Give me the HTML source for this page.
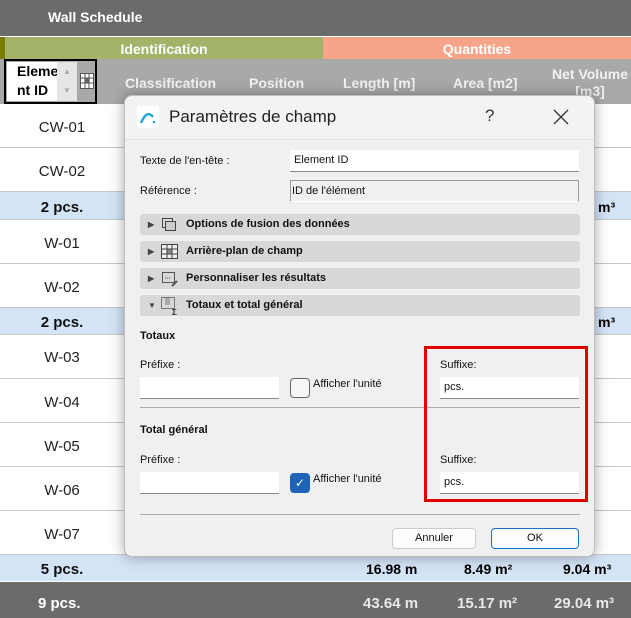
<!DOCTYPE html>
<html><head><meta charset="utf-8"><style>
*{margin:0;padding:0;box-sizing:border-box}
body{width:631px;height:618px;overflow:hidden;position:relative;background:#fff;font-family:"Liberation Sans",Arial,sans-serif}
.a{position:absolute}
.row{position:absolute;left:0;width:631px;border-bottom:1px solid #c8c8c8;background:#fff}
.row span{position:absolute;left:0;width:124px;text-align:center;font-size:15px;color:#222}
.sub{background:#d4e4f7}
.sub span{font-weight:bold;color:#111}
.dlg{position:absolute;left:124px;top:95px;width:471px;height:462px;background:#f0f0f0;border:1px solid #bdbdbd;border-radius:8px;box-shadow:0 0 14px rgba(0,0,0,.35);font-family:"Liberation Sans",sans-serif;font-size:11px;color:#111}
.in{position:absolute;background:#fff;border-bottom:1px solid #8a8a8a;font-size:11px;padding:4px 4px}
.bar{position:absolute;left:15px;width:440px;height:21px;background:#d8d8d8;border-radius:3px;font-weight:bold;font-size:11px;line-height:21px}
.bar .t{position:absolute;left:46px}
.bar .tri{position:absolute;left:8px;top:0;font-size:8px;color:#444}
.lbl{position:absolute;font-size:11px}
</style></head><body>
<div class="a" style="left:0;top:0;width:631px;height:36px;background:#6b6b6b"></div>
<div class="a" style="left:48px;top:9px;color:#fff;font-weight:bold;font-size:14px">Wall Schedule</div>
<div class="a" style="left:0;top:36px;width:631px;height:1px;background:#fff"></div>
<div class="a" style="left:0;top:37px;width:5px;height:22px;background:#7a7a00"></div>
<div class="a" style="left:5px;top:37px;width:318px;height:22px;background:#a3b46a;color:#fff;font-weight:bold;font-size:14px;text-align:center;line-height:24px">Identification</div>
<div class="a" style="left:323px;top:37px;width:308px;height:22px;background:#f7a58a;color:#fff;font-weight:bold;font-size:14px;text-align:center;line-height:24px">Quantities</div>
<div class="a" style="left:0;top:59px;width:631px;height:45px;background:#a9a9a9"></div>
<div class="a" style="left:4px;top:59px;width:93px;height:45px;border:2px solid #000;background:#a9a9a9"></div>
<div class="a" style="left:7px;top:62px;width:70px;height:39px;background:#fff;font-weight:bold;font-size:14px;line-height:19px;padding-left:10px">Eleme<br>nt ID</div>
<div class="a" style="left:57px;top:62px;width:20px;height:39px;background:#e6e6e6;color:#aaa;font-size:8px;text-align:center;line-height:19px">▲<br>▼</div>
<svg class="a" style="left:80px;top:73px" width="14" height="16"><rect x="0.5" y="0.5" width="13" height="15" fill="#fff" stroke="#555"/><rect x="5" y="5" width="4" height="5" fill="#666"/><path d="M5 0V16M9 0V16M0 5H14M0 10H14" stroke="#555"/></svg>
<div class="a" style="left:125px;top:75px;color:#f2f2f2;font-weight:bold;font-size:14px">Classification</div>
<div class="a" style="left:249px;top:75px;color:#f2f2f2;font-weight:bold;font-size:14px">Position</div>
<div class="a" style="left:343px;top:75px;color:#f2f2f2;font-weight:bold;font-size:14px">Length [m]</div>
<div class="a" style="left:453px;top:75px;color:#f2f2f2;font-weight:bold;font-size:14px">Area [m2]</div>
<div class="a" style="left:545px;top:66px;color:#f2f2f2;font-weight:bold;font-size:14px;text-align:center;width:90px;line-height:17px">Net Volume<br>[m3]</div>

<div class="row" style="top:104px;height:44px"><span style="top:15px">CW-01</span></div>
<div class="row" style="top:148px;height:44px"><span style="top:15px">CW-02</span></div>
<div class="row sub" style="top:192px;height:28px"><span style="top:7px">2 pcs.</span><b class="a" style="left:598px;top:7px;font-size:14px">m³</b></div>
<div class="row" style="top:220px;height:44px"><span style="top:15px">W-01</span></div>
<div class="row" style="top:264px;height:44px"><span style="top:15px">W-02</span></div>
<div class="row sub" style="top:308px;height:27px"><span style="top:6px">2 pcs.</span><b class="a" style="left:598px;top:6px;font-size:14px">m³</b></div>
<div class="row" style="top:335px;height:44px"><span style="top:14px">W-03</span></div>
<div class="row" style="top:379px;height:44px"><span style="top:15px">W-04</span></div>
<div class="row" style="top:423px;height:44px"><span style="top:15px">W-05</span></div>
<div class="row" style="top:467px;height:44px"><span style="top:15px">W-06</span></div>
<div class="row" style="top:511px;height:44px"><span style="top:15px">W-07</span></div>
<div class="row sub" style="top:555px;height:27px;border-bottom:1px solid #fff"><span style="top:6px">5 pcs.</span>
<b class="a" style="left:366px;top:6px;font-size:14px">16.98 m</b><b class="a" style="left:464px;top:6px;font-size:14px">8.49 m²</b><b class="a" style="left:563px;top:6px;font-size:14px">9.04 m³</b></div>
<div class="a" style="left:0;top:582px;width:631px;height:36px;background:#6b6b6b;color:#e8e8e8;font-weight:bold;font-size:15px">
<span class="a" style="left:38px;top:13px;color:#fff">9 pcs.</span>
<span class="a" style="left:363px;top:13px">43.64 m</span><span class="a" style="left:457px;top:13px">15.17 m²</span><span class="a" style="left:554px;top:13px">29.04 m³</span></div>

<div class="dlg">
<div class="a" style="left:0;top:0;width:469px;height:43px;background:#f3f3f3;border-radius:8px 8px 0 0"></div>
<svg class="a" style="left:12px;top:10px" width="22" height="22" viewBox="0 0 22 22"><rect width="22" height="22" rx="3" fill="#fff"/><path d="M4 17 Q10 3 16 11" stroke="#29a8e0" stroke-width="2.5" fill="none"/><circle cx="17" cy="16" r="1.3" fill="#29a8e0"/></svg>
<div class="a" style="left:44px;top:11px;font-size:17px;color:#222">Paramètres de champ</div>
<div class="a" style="left:360px;top:10px;font-size:17px;color:#333">?</div>
<svg class="a" style="left:428px;top:13px" width="16" height="16"><path d="M1 1L15 15M15 1L1 15" stroke="#333" stroke-width="1.3"/></svg>
<div class="a" style="left:0;top:43px;width:469px;height:1px;background:#e2e2e2"></div>
<div class="lbl" style="left:15px;top:59px">Texte de l'en-tête :</div>
<div class="in" style="left:165px;top:54px;width:289px;height:22px">Element ID</div>
<div class="lbl" style="left:15px;top:89px">Référence :</div>
<div class="in" style="left:165px;top:84px;width:289px;height:22px;background:#f0f0f0;border:1px solid #9a9a9a;border-bottom-color:#fff;padding-left:1px">ID de l'élément</div>
<div class="bar" style="top:118px"><span class="tri">▶</span><svg class="a" style="left:22px;top:4px" width="14" height="13"><rect x="0.5" y="0.5" width="10" height="9" fill="none" stroke="#444"/><rect x="3.5" y="3.5" width="10" height="9" fill="#ccc" stroke="#444"/></svg><span class="t">Options de fusion des données</span></div>
<div class="bar" style="top:145px"><span class="tri">▶</span><svg class="a" style="left:21px;top:3px" width="17" height="15"><rect x="0.5" y="0.5" width="16" height="14" fill="#eee" stroke="#444"/><rect x="6" y="5" width="5" height="5" fill="#888"/><path d="M6 0V15M11 0V15M0 5H17M0 10H17" stroke="#444"/></svg><span class="t">Arrière-plan de champ</span></div>
<div class="bar" style="top:172px"><span class="tri">▶</span><svg class="a" style="left:21px;top:3px" width="18" height="16"><rect x="1.5" y="1.5" width="12" height="10" fill="none" stroke="#555"/><path d="M4 7h6" stroke="#555" stroke-dasharray="1 1"/><path d="M11 15l5-5" stroke="#555" stroke-width="2"/></svg><span class="t">Personnaliser les résultats</span></div>
<div class="bar" style="top:199px"><span class="tri" style="font-size:8px">▼</span><svg class="a" style="left:21px;top:2px" width="18" height="18"><rect x="0.5" y="0.5" width="13" height="11" fill="none" stroke="#777"/><rect x="4" y="1" width="5" height="7" fill="#aaa"/><text x="11" y="18" font-size="8" fill="#333">Σ</text></svg><span class="t">Totaux et total général</span></div>
<div class="lbl" style="left:15px;top:234px;font-weight:bold">Totaux</div>
<div class="lbl" style="left:15px;top:263px">Préfixe :</div>
<div class="in" style="left:15px;top:281px;width:139px;height:22px"></div>
<div class="a" style="left:165px;top:282px;width:20px;height:20px;border:1px solid #666;border-radius:4px;background:#f6f6f6"></div>
<div class="lbl" style="left:188px;top:282px">Afficher l'unité</div>
<div class="lbl" style="left:315px;top:263px">Suffixe:</div>
<div class="in" style="left:315px;top:281px;width:139px;height:22px">pcs.</div>
<div class="a" style="left:15px;top:311px;width:440px;height:1px;background:#aaa"></div>
<div class="lbl" style="left:15px;top:328px;font-weight:bold">Total général</div>
<div class="lbl" style="left:15px;top:358px">Préfixe :</div>
<div class="in" style="left:15px;top:376px;width:139px;height:22px"></div>
<div class="a" style="left:165px;top:377px;width:20px;height:20px;border-radius:4px;background:#1e63b8;color:#fff;font-size:12px;text-align:center;line-height:20px">✓</div>
<div class="lbl" style="left:188px;top:377px">Afficher l'unité</div>
<div class="lbl" style="left:315px;top:358px">Suffixe:</div>
<div class="in" style="left:315px;top:376px;width:139px;height:22px">pcs.</div>
<div class="a" style="left:299px;top:250px;width:164px;height:156px;border:3px solid #e00000"></div>
<div class="a" style="left:15px;top:418px;width:440px;height:1px;background:#aaa"></div>
<div class="a" style="left:267px;top:432px;width:84px;height:21px;background:#fdfdfd;border:1px solid #ccc;border-radius:4px;text-align:center;line-height:19px;font-size:11px">Annuler</div>
<div class="a" style="left:366px;top:432px;width:88px;height:21px;background:#fdfdfd;border:1px solid #1e6fc8;border-radius:4px;text-align:center;line-height:19px;font-size:11px">OK</div>
</div>
</body></html>
